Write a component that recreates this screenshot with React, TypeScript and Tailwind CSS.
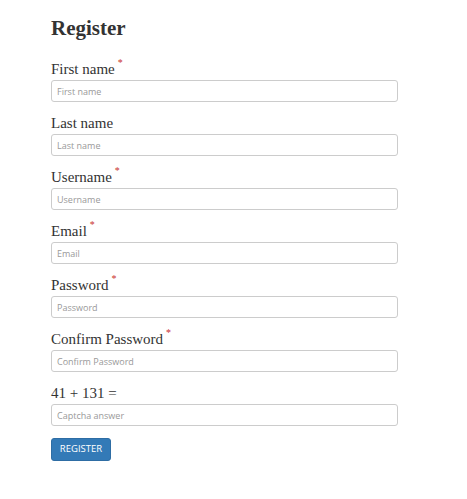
import React from "react";

const fields: { label: string; placeholder: string; required: boolean; type?: string }[] = [
  { label: "First name", placeholder: "First name", required: true },
  { label: "Last name", placeholder: "Last name", required: false },
  { label: "Username", placeholder: "Username", required: true },
  { label: "Email", placeholder: "Email", required: true },
  { label: "Password", placeholder: "Password", required: true, type: "password" },
  { label: "Confirm Password", placeholder: "Confirm Password", required: true, type: "password" },
];

export default function App() {
  return (
    <div className="min-h-[499px] w-[467px] bg-white pl-[51px] pt-[14px]">
      <h1 className="text-[21px] font-bold leading-[28px] text-[#333] [font-family:'Liberation_Serif',serif]">
        Register
      </h1>
      <form className="mt-[16px] flex w-[347px] flex-col" onSubmit={(e) => e.preventDefault()}>
        {fields.map((f) => (
          <div key={f.label} className="mb-[10px] flex flex-col">
            <label className="flex h-[22px] items-end pb-[2px] text-[15px] leading-[18px] text-[#333] [font-family:'Liberation_Serif',serif]">
              {f.label}
              {f.required && <span className="relative -top-[6px] ml-[3px] text-[10px] text-[#c9302c]">*</span>}
            </label>
            <input
              type={f.type ?? "text"}
              placeholder={f.placeholder}
              className="h-[22px] rounded-[3px] border border-[#ccc] px-[5px] text-[9px] text-[#555] placeholder:text-[#999] [font-family:'Open_Sans',sans-serif] outline-none"
            />
          </div>
        ))}
        <div className="mb-[8px] flex flex-col">
          <label className="flex h-[22px] items-end pb-[2px] text-[15px] leading-[18px] text-[#333] [font-family:'Liberation_Serif',serif]">
            41 + 131 =
          </label>
          <input
            type="text"
            placeholder="Captcha answer"
            className="h-[22px] rounded-[3px] border border-[#ccc] px-[5px] text-[9px] text-[#555] placeholder:text-[#999] [font-family:'Open_Sans',sans-serif] outline-none"
          />
        </div>
        <div>
          <button
            type="submit"
            className="h-[23px] w-[60px] rounded-[3px] border border-[#2e6da4] bg-[#337ab7] text-[9.5px] text-white [font-family:'Open_Sans',sans-serif]"
          >
            REGISTER
          </button>
        </div>
      </form>
    </div>
  );
}
